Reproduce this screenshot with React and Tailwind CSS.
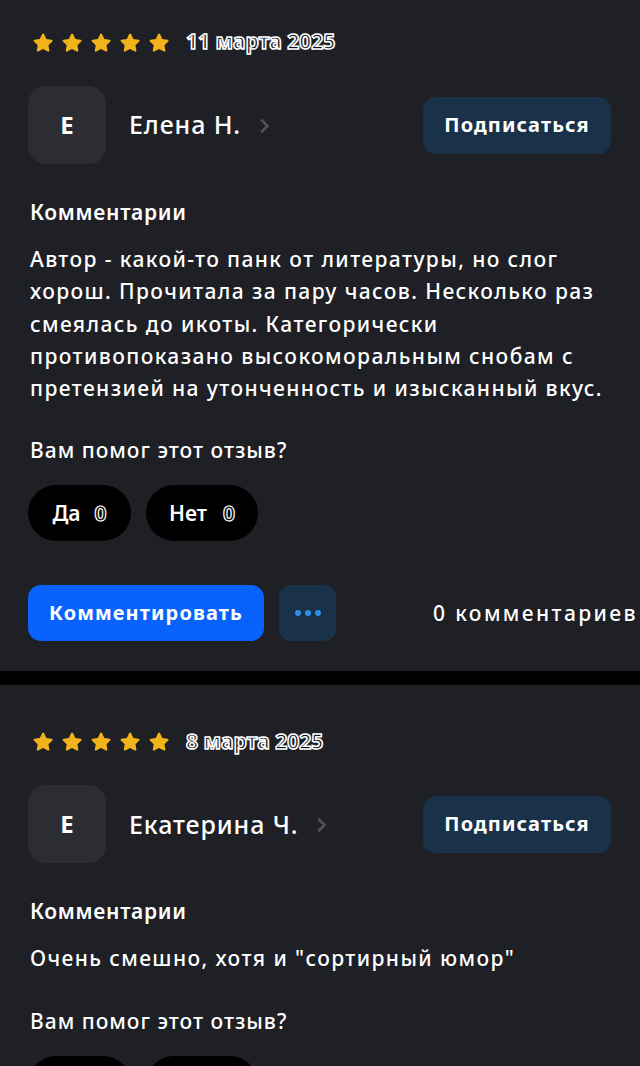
import React from "react";

const font = { fontFamily: '"Noto Sans", "Open Sans", sans-serif' };

const Star = () => (
  <svg width="22" height="21" viewBox="0 0 24 23">
    <path
      d="M12 1.6c.5 0 .9.3 1.1.7l2.6 5.3 5.8.8c.9.1 1.3 1.3.7 1.9l-4.2 4.1 1 5.8c.2.9-.8 1.6-1.6 1.2L12 18.7l-5.2 2.7c-.8.4-1.8-.3-1.6-1.2l1-5.8L2 10.3c-.7-.6-.3-1.8.7-1.9l5.8-.8 2.6-5.3c.2-.4.6-.7.9-.7z"
      fill="#f1b21a"
    />
  </svg>
);

const Chevron = () => (
  <svg width="12" height="16" viewBox="0 0 12 16" className="ml-[18px] mt-[2px]">
    <path d="M3 2.5l5.5 5.5L3 13.5" stroke="#4f5156" strokeWidth="2.6" fill="none" strokeLinecap="round" strokeLinejoin="round" />
  </svg>
);

const Review = ({ date, name, text, first, showFooter = true }) => (
  <div className={`px-[28px] bg-[#1e2026] ${first ? "pt-[30px]" : "pt-[44px]"} pb-[30px]`}>
    <div className="flex items-center h-[24px]">
      <div className="flex gap-[7px] ml-[4px]">
        <Star /><Star /><Star /><Star /><Star />
      </div>
      <span className="ml-[16px] text-[21px] font-bold text-[#15161a] [-webkit-text-stroke:1.6px_#ffffff] tracking-[0px]">
        {date}
      </span>
    </div>
    <div className="flex items-center mt-[32px]">
      <div className="w-[78px] h-[78px] rounded-[18px] bg-[#2c2d33] flex items-center justify-center text-white text-[24px] font-bold">
        E
      </div>
      <span className="ml-[23px] text-white text-[25px] font-medium tracking-[0.9px]">{name}</span>
      <Chevron />
      <button className="ml-auto mr-[1px] w-[188px] h-[57px] rounded-[13px] bg-[#19324a] text-white text-[20px] font-bold tracking-[1.1px]">
        Подписаться
      </button>
    </div>
    <div className="mt-[34px] ml-[2px] text-white text-[21px] font-semibold leading-[28px] tracking-[0.7px]">Комментарии</div>
    <p className="mt-[17px] ml-[2px] text-white text-[21px] font-medium leading-[32.3px] tracking-[1.4px]">{text}</p>
    <div className="mt-[31px] ml-[2px] text-white text-[21px] font-medium leading-[30px] tracking-[1px]">Вам помог этот отзыв?</div>
    <div className="flex gap-[15px] mt-[20px]">
      <button className="h-[56px] w-[103px] rounded-full bg-black text-white text-[21px] font-semibold flex items-center justify-center gap-[14px]">
        Да <span className="text-[#0b0b0b] [-webkit-text-stroke:1.2px_#ffffff] font-bold">0</span>
      </button>
      <button className="h-[56px] w-[112px] rounded-full bg-black text-white text-[21px] font-semibold flex items-center justify-center gap-[16px]">
        Нет <span className="text-[#0b0b0b] [-webkit-text-stroke:1.2px_#ffffff] font-bold">0</span>
      </button>
    </div>
    {showFooter && (
      <div className="flex items-center mt-[44px]">
        <button className="h-[56px] w-[236px] rounded-[13px] bg-[#0a62fd] text-white text-[20px] font-bold tracking-[1.1px]">
          Комментировать
        </button>
        <button className="ml-[15px] h-[56px] w-[57px] rounded-[12px] bg-[#19324a] flex items-center justify-center gap-[4px]">
          <span className="w-[6px] h-[6px] rounded-full bg-[#2e8fe8]" />
          <span className="w-[6px] h-[6px] rounded-full bg-[#2e8fe8]" />
          <span className="w-[6px] h-[6px] rounded-full bg-[#2e8fe8]" />
        </button>
        <span className="ml-auto -mr-[26px] text-white text-[21px] font-medium tracking-[2.4px]">0 комментариев</span>
      </div>
    )}
  </div>
);

export default function App() {
  return (
    <div style={font} className="w-[640px] h-[1066px] overflow-hidden bg-[#1e2026]">
      <Review
        first
        date="11 марта 2025"
        name="Елена Н."
        text="Автор - какой-то панк от литературы, но слог хорош. Прочитала за пару часов. Несколько раз смеялась до икоты. Категорически противопоказано высокоморальным снобам с претензией на утонченность и изысканный вкус."
      />
      <div className="h-[14px] bg-black" />
      <Review
        date="8 марта 2025"
        name="Екатерина Ч."
        text={'Очень смешно, хотя и "сортирный юмор"'}
      />
    </div>
  );
}
